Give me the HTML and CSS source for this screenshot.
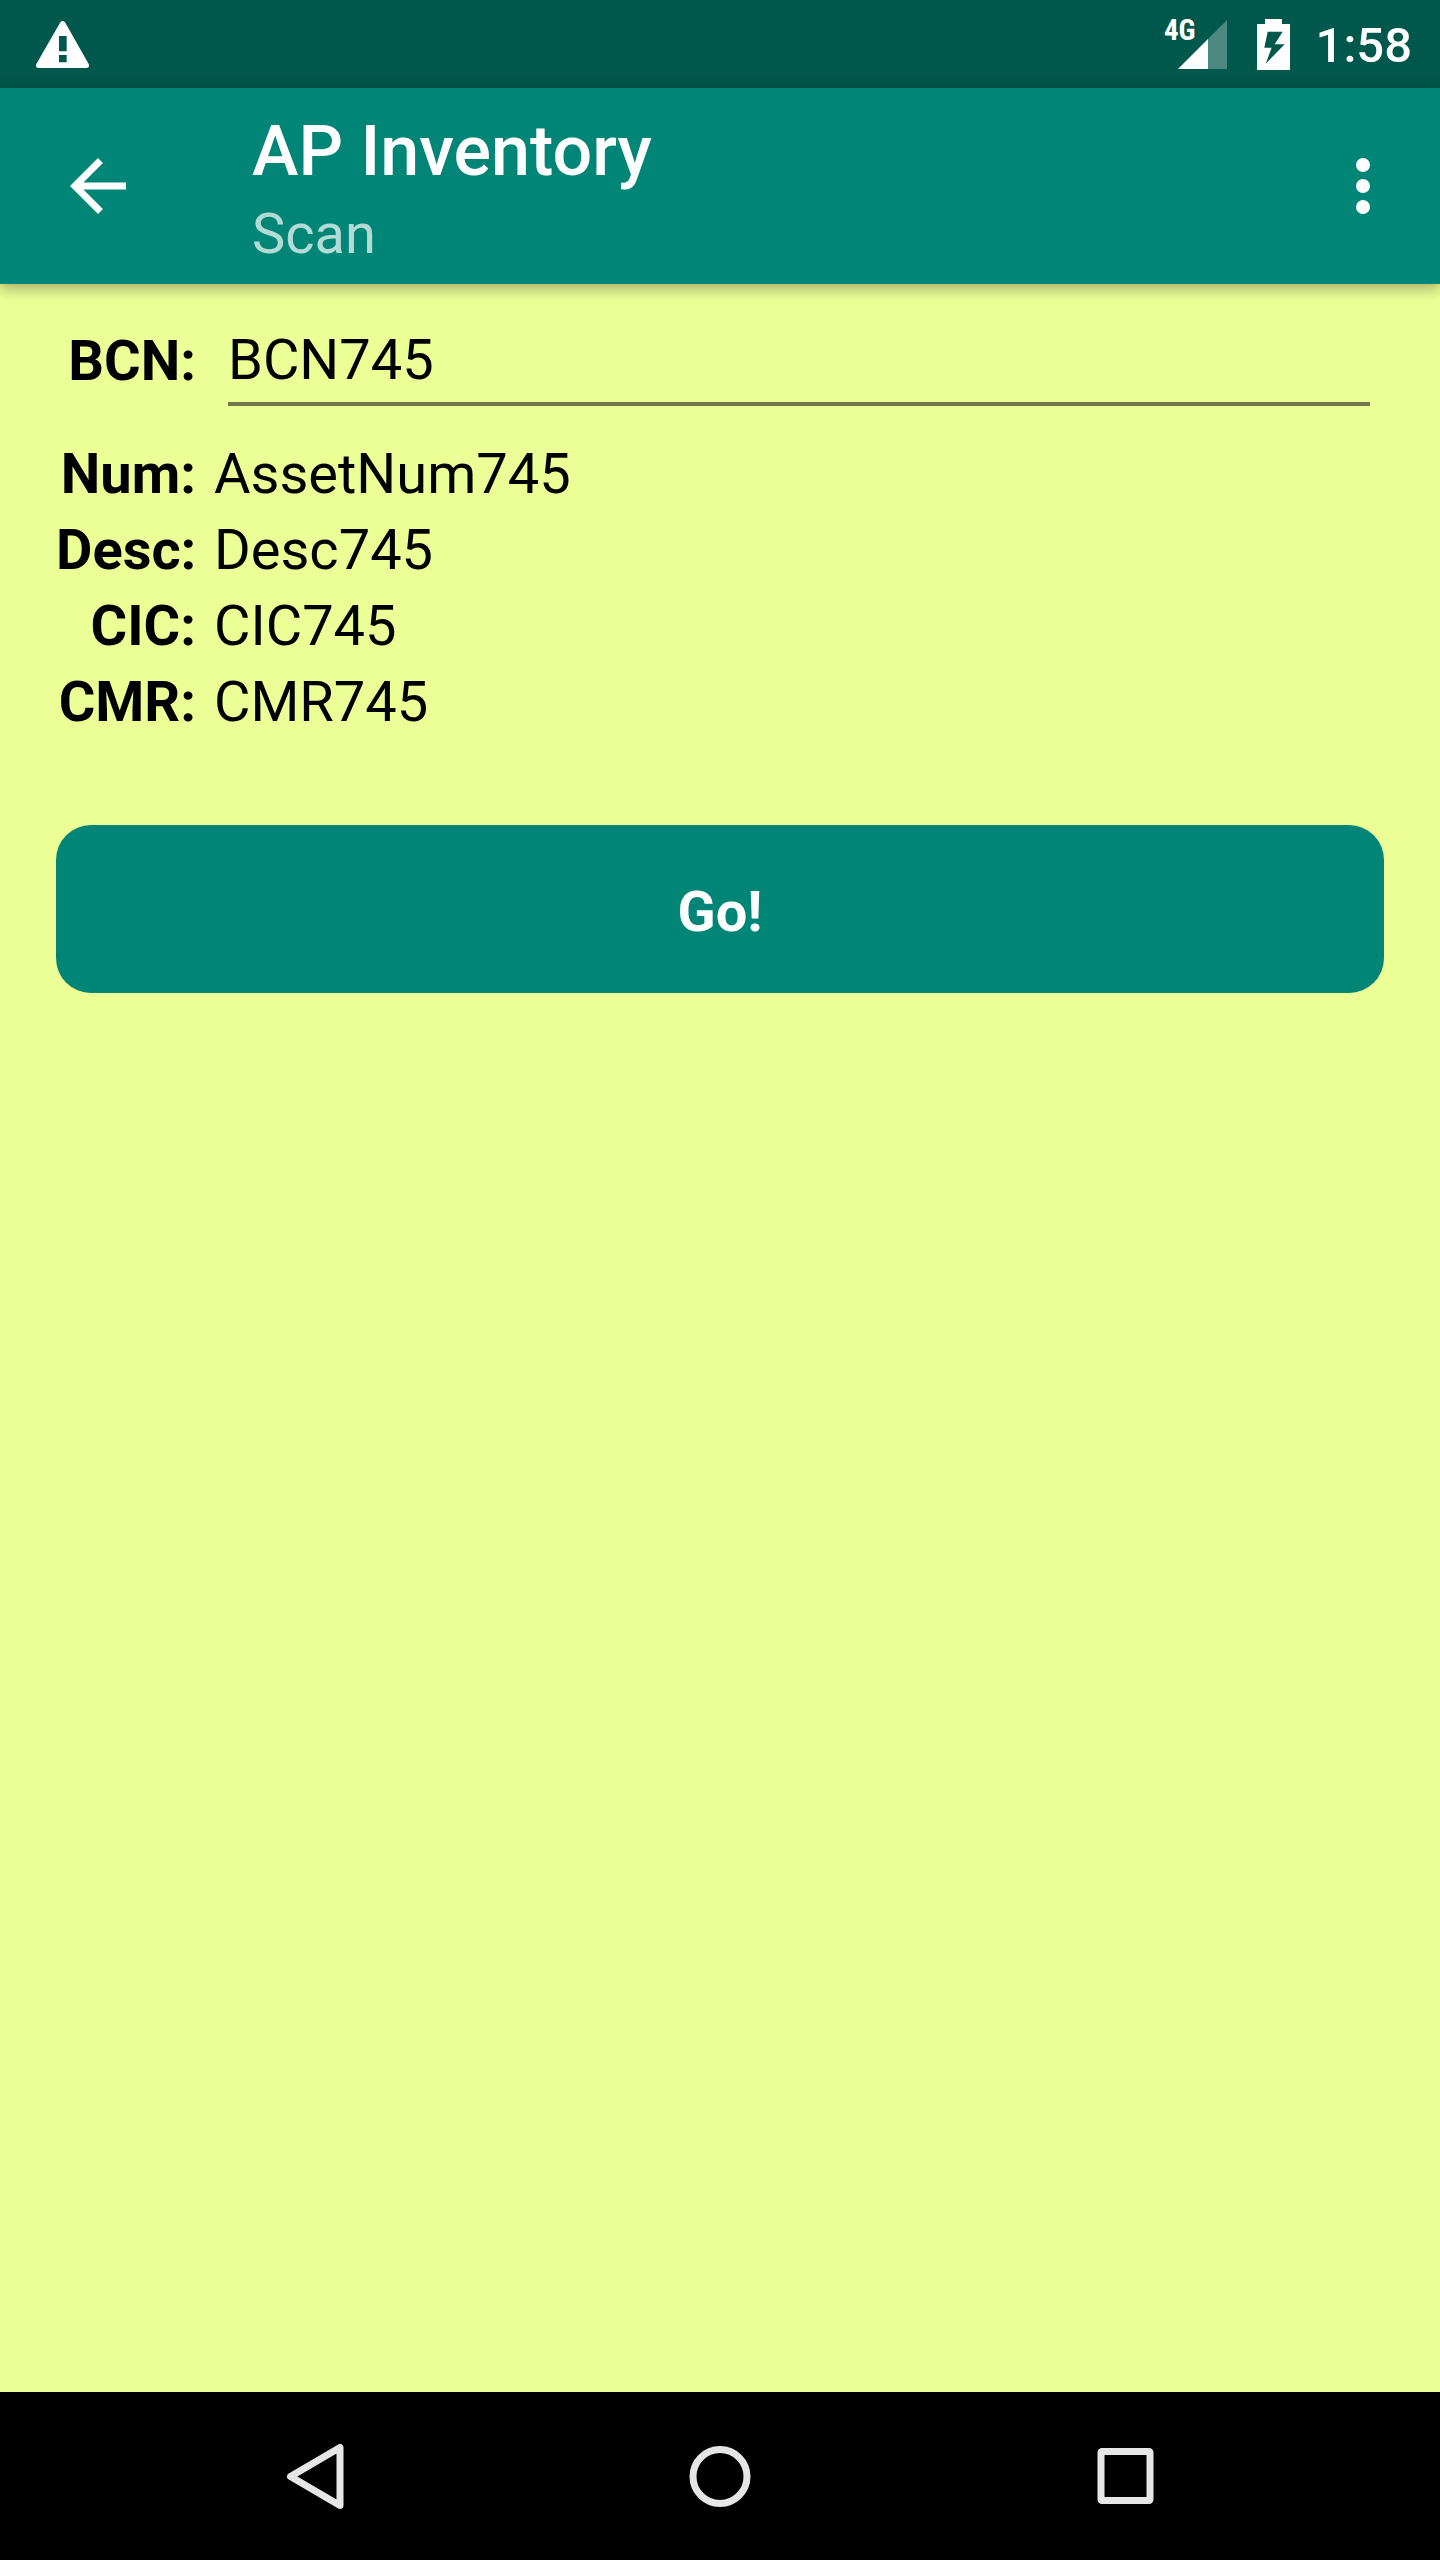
FILE: index.html
```html
<!DOCTYPE html>
<html lang="en">
<head>
<meta charset="utf-8">
<meta name="viewport" content="width=device-width, initial-scale=1">
<title>AP Inventory</title>
<link rel="stylesheet" href="styles.css">
</head>
<body>
<div class="screen">
  <div class="status-bar">
    <svg class="icon-warning" viewBox="108 59 159 141" aria-hidden="true">
      <path fill="#fff" fill-rule="evenodd" d="M181 63Q188 55 195 63L266 188Q270 200 258 200H117Q105 200 109 188ZM177 104V150H200V104ZM177 161V183H200V161Z"/>
    </svg>
    <div class="status-right">
      <span class="network">4G</span>
      <svg class="icon-signal" viewBox="0 0 49 49" aria-hidden="true">
        <path fill="#fff" fill-opacity=".3" d="M0 49L49 0V49Z"/>
        <path fill="#fff" d="M0 49L30 19V49Z"/>
      </svg>
      <svg class="icon-battery" viewBox="411 54 99 153" aria-hidden="true">
        <path fill="#fff" fill-rule="evenodd" d="M435 54H486V69H510V207H411V69H435ZM443 92L433 140H455L437 188L494 130H464L488 92Z"/>
      </svg>
      <time class="clock">1:58</time>
    </div>
  </div>
  <header class="toolbar">
    <button class="icon-button" type="button" aria-label="Back">
      <svg viewBox="0 0 24 24" aria-hidden="true"><path fill="#fff" d="M20 11H7.83l5.59-5.59L12 4l-8 8 8 8 1.41-1.41L7.83 13H20v-2z"/></svg>
    </button>
    <div class="titles">
      <h1 class="title">AP Inventory</h1>
      <p class="subtitle">Scan</p>
    </div>
    <button class="icon-button" type="button" aria-label="More options">
      <svg viewBox="0 0 24 24" aria-hidden="true"><g fill="#fff"><circle cx="12" cy="6" r="2"/><circle cx="12" cy="12" r="2"/><circle cx="12" cy="18" r="2"/></g></svg>
    </button>
  </header>
  <main class="content">
    <form class="scan-form">
      <div class="field">
        <label class="label" for="bcn">BCN:</label>
        <input class="input" id="bcn" type="text" value="BCN745">
      </div>
      <dl class="details">
        <dt class="label">Num:</dt><dd class="value">AssetNum745</dd>
        <dt class="label">Desc:</dt><dd class="value">Desc745</dd>
        <dt class="label">CIC:</dt><dd class="value">CIC745</dd>
        <dt class="label">CMR:</dt><dd class="value">CMR745</dd>
      </dl>
      <button class="go" type="button">Go!</button>
    </form>
  </main>
  <nav class="nav-bar">
    <button class="nav-button" type="button" aria-label="Back">
      <svg viewBox="0 0 84 84" aria-hidden="true"><path class="nav-shape" d="M65 13.500V71.500L15.500 42.500Z"/></svg>
    </button>
    <button class="nav-button" type="button" aria-label="Home">
      <svg viewBox="0 0 84 84" aria-hidden="true"><circle class="nav-shape" cx="42" cy="42.500" r="27"/></svg>
    </button>
    <button class="nav-button" type="button" aria-label="Recent apps">
      <svg viewBox="0 0 84 84" aria-hidden="true"><rect class="nav-shape" x="20" y="17.500" width="49" height="49" rx="1"/></svg>
    </button>
  </nav>
</div>
</body>
</html>
```
FILE: styles.css
```css
* {
  box-sizing: border-box;
}

body {
  margin: 0;
  background: #ebff96;
  color: #000;
  font-family: Roboto, "Noto Sans", sans-serif;
  font-size: 56px;
}

button,
input {
  margin: 0;
  padding: 0;
  border: 0;
  border-radius: 0;
  background: none;
  color: inherit;
  font: inherit;
}

svg {
  display: block;
}

.screen {
  display: flex;
  flex-direction: column;
  min-height: 100vh;
}

.status-bar {
  display: flex;
  align-items: center;
  justify-content: space-between;
  height: 88px;
  padding: 0 28px 0 36px;
  background: #00574b;
  color: #fff;
}

.icon-warning {
  width: 53px;
  height: 47px;
}

.status-right {
  display: flex;
  align-items: center;
}

.network {
  align-self: flex-start;
  margin-right: -18px;
  font-family: "Roboto Condensed", Roboto, sans-serif;
  font-size: 29px;
  font-weight: 700;
  line-height: 32px;
}

.icon-signal {
  width: 49px;
  height: 49px;
}

.icon-battery {
  width: 33px;
  height: 51px;
  margin: 0 26px 0 30px;
}

.clock {
  padding-top: 4px;
  font-size: 49px;
  font-weight: 500;
  line-height: 56px;
}

.toolbar {
  position: relative;
  display: flex;
  align-items: center;
  height: 196px;
  padding: 0 35px 0 56px;
  background: #008577;
  color: #fff;
  box-shadow: 0 4px 14px rgba(0, 0, 0, 0.35);
}

.icon-button {
  flex: none;
  width: 84px;
  height: 84px;
}

.titles {
  flex: 1;
  margin-left: 112px;
  padding-top: 4px;
}

.title {
  margin: 0;
  font-size: 70px;
  font-weight: 500;
  line-height: 92px;
}

.subtitle {
  margin: 0;
  color: rgba(255, 255, 255, 0.7);
  line-height: 74px;
}

.content {
  flex: 1;
  padding: 32px 56px;
}

.scan-form {
  display: flex;
  flex-direction: column;
}

.field,
.details {
  display: grid;
  grid-template-columns: 140px 1fr;
}

.field {
  column-gap: 32px;
  align-items: center;
  padding-right: 14px;
}

.label {
  font-weight: 700;
  text-align: right;
  line-height: 76px;
}

.input {
  width: 100%;
  height: 90px;
  padding-top: 2px;
  border-bottom: 4px solid #6f7848;
  outline: 0;
}

.details {
  column-gap: 18px;
  margin: 30px 0 0;
}

.value {
  margin: 0;
  line-height: 76px;
}

.go {
  height: 168px;
  margin-top: 85px;
  padding-top: 6px;
  border-radius: 35px;
  background: #008577;
  color: #fff;
  font-weight: 700;
}

.nav-bar {
  display: flex;
  justify-content: center;
  gap: 14%;
  height: 168px;
  background: #000;
}

.nav-button {
  display: flex;
  align-items: center;
  justify-content: center;
  width: 14%;
}

.nav-button svg {
  width: 84px;
  height: 84px;
}

.nav-shape {
  fill: none;
  stroke: #e6e6e6;
  stroke-width: 7;
  stroke-linejoin: round;
}
```
